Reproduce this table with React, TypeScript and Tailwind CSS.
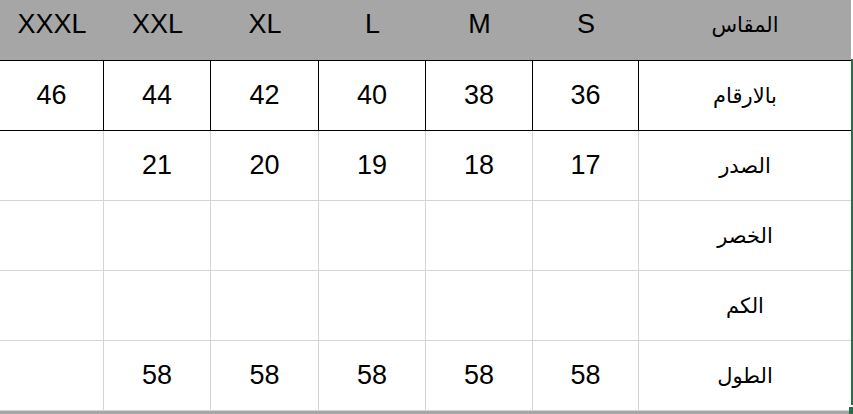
const sizes = ["XXXL", "XXL", "XL", "L", "M", "S"];

const rows: { label: string; values: string[] }[] = [
  { label: "بالارقام", values: ["46", "44", "42", "40", "38", "36"] },
  { label: "الصدر", values: ["", "21", "20", "19", "18", "17"] },
  { label: "الخصر", values: ["", "", "", "", "", ""] },
  { label: "الكم", values: ["", "", "", "", "", ""] },
  { label: "الطول", values: ["", "58", "58", "58", "58", "58"] },
];

const colWidths = ["w-[104px]", "w-[107px]", "w-[108px]", "w-[107px]", "w-[107px]", "w-[106px]"];

export default function App() {
  return (
    <div
      className="relative w-[853px] h-[414px] overflow-hidden bg-white text-black"
      style={{ fontFamily: '"Liberation Sans", Arial, "DejaVu Sans", sans-serif' }}
    >
      <div className="w-[851px]">
        {/* header */}
        <div className="flex h-[61px] bg-[#a6a6a6] border-b border-black">
          {sizes.map((s, i) => (
            <div key={s} className={`${colWidths[i]} flex items-center justify-center pb-[11px] text-[27px]`}>
              {s}
            </div>
          ))}
          <div className="flex-1 flex items-center justify-center pb-[11px] text-[21px]" dir="rtl">
            المقاس
          </div>
        </div>

        {rows.map((r, ri) => (
          <div
            key={r.label}
            className={`flex h-[70px] border-b ${ri === 0 ? "border-black" : "border-[#d4d4d4]"}`}
          >
            {r.values.map((v, i) => (
              <div
                key={i}
                className={`${colWidths[i]} flex items-center justify-center border-r text-[27px] ${ri === 0 ? "border-black" : "border-[#d4d4d4]"}`}
              >
                {v}
              </div>
            ))}
            <div className="flex-1 flex items-center justify-center text-[21px]" dir="rtl">
              {r.label}
            </div>
          </div>
        ))}
      </div>

      <div className="h-[3px] w-[849px] bg-[#a6a6a6]" />

      {/* selection border */}
      <div className="absolute left-[851px] top-[59px] w-[2px] h-[346px] bg-[#217346]" />
      <div className="absolute left-[849px] top-[407px] w-[4px] h-[7px] bg-[#217346]" />
    </div>
  );
}
